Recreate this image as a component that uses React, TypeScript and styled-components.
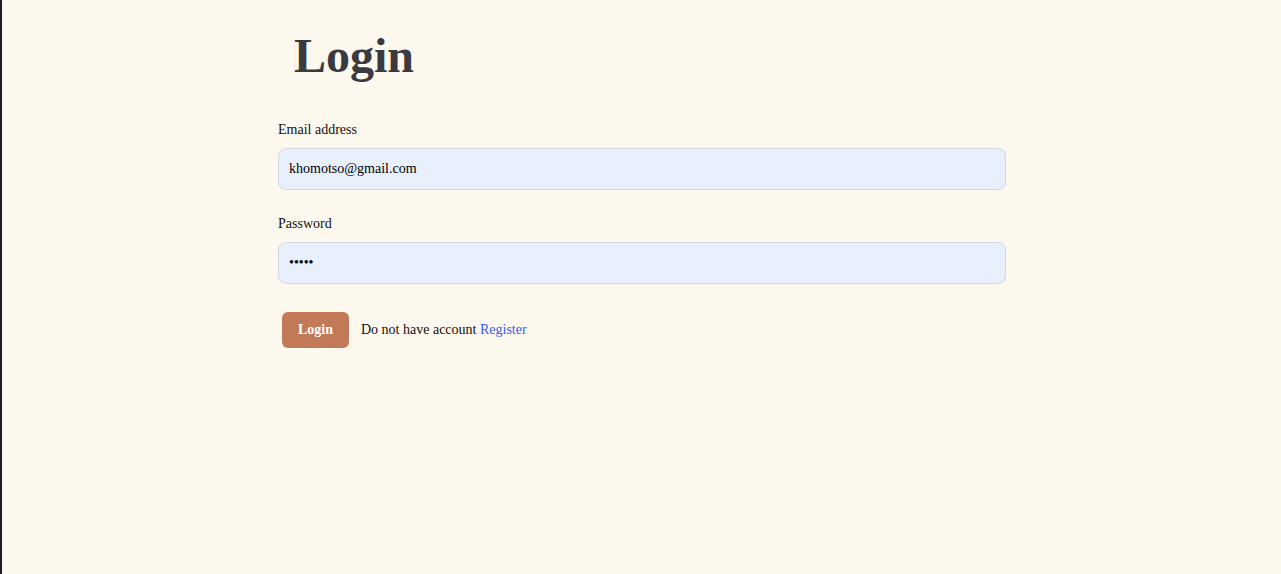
import React from "react";
import styled, { createGlobalStyle } from "styled-components";

const Global = createGlobalStyle`
  html, body { margin: 0; padding: 0; background: #fdf8ee; }
  body { font-family: "Liberation Serif", "Times New Roman", serif; }
`;

const Page = styled.div`
  min-height: 574px;
  box-sizing: border-box;
  border-left: 2px solid #1e1e1e;
  display: flex;
  justify-content: center;
  padding-left: 1px;
`;

const Card = styled.div`
  width: 728px;
  display: flex;
  flex-direction: column;
`;

const Title = styled.h1`
  margin: 28px 0 39px;
  padding: 0 16px;
  font-size: 48px;
  line-height: 55px;
  font-weight: 700;
  color: #3a3a41;
`;

const Field = styled.div`
  display: flex;
  flex-direction: column;
  gap: 10px;
  margin-bottom: 26px;
`;

const Label = styled.label`
  font-size: 14px;
  line-height: 16px;
  color: #111;
`;

const Input = styled.input`
  box-sizing: border-box;
  height: 42px;
  width: 100%;
  padding: 0 10px;
  border: 1px solid #d0d7e1;
  border-radius: 8px;
  background: #e8f0fe;
  font-family: "Liberation Serif", "Times New Roman", serif;
  font-size: 14px;
  color: #000;
  outline: none;
`;

const Actions = styled.div`
  display: flex;
  align-items: center;
  gap: 12px;
  padding-left: 4px;
  margin-top: 2px;
`;

const Button = styled.button`
  height: 36px;
  width: 67px;
  border: none;
  border-radius: 6px;
  background: #c27958;
  color: #fff;
  font-family: "Liberation Serif", "Times New Roman", serif;
  font-weight: 700;
  font-size: 14px;
  cursor: pointer;
`;

const Note = styled.span`
  font-size: 14px;
  color: #111;
`;

const Link = styled.a`
  color: #2f5cff;
  text-decoration: none;
`;

export default function App() {
  return (
    <>
      <Global />
      <Page>
        <Card>
          <Title>Login</Title>
          <Field>
            <Label htmlFor="email">Email address</Label>
            <Input id="email" type="email" defaultValue="khomotso@gmail.com" />
          </Field>
          <Field>
            <Label htmlFor="pw">Password</Label>
            <Input id="pw" type="password" defaultValue="12345" />
          </Field>
          <Actions>
            <Button>Login</Button>
            <Note>
              Do not have account <Link href="#">Register</Link>
            </Note>
          </Actions>
        </Card>
      </Page>
    </>
  );
}
